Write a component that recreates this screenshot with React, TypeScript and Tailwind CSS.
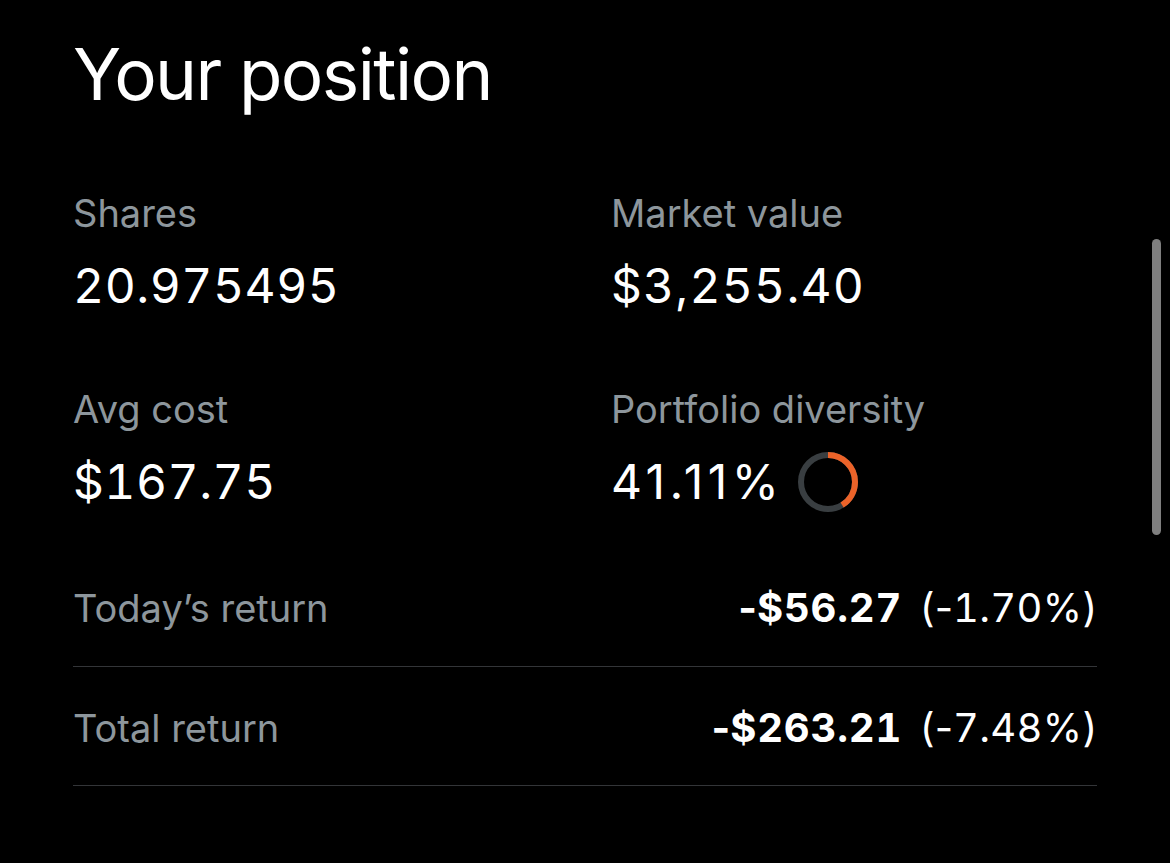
import React from "react";

function Ring() {
  const r = 27;
  const c = 2 * Math.PI * r;
  const pct = 0.4111;
  return (
    <svg width="62" height="62" viewBox="0 0 62 62" className="ml-[14px] shrink-0">
      <circle cx="31" cy="31" r={r} fill="none" stroke="#393e41" strokeWidth="6" />
      <circle
        cx="31"
        cy="31"
        r={r}
        fill="none"
        stroke="#ec6329"
        strokeWidth="6"
        strokeDasharray={`${c * pct} ${c}`}
        transform="rotate(-90 31 31)"
      />
    </svg>
  );
}

function Stat({ label, children }: { label: string; children: React.ReactNode }) {
  return (
    <div className="flex flex-col">
      <div className="h-[46px] text-[38px] leading-[46px] text-[#8d969c]">{label}</div>
      <div className="mt-[22px] flex h-[56px] items-center text-[48px] leading-[56px] text-white">
        {children}
      </div>
    </div>
  );
}

function Ret({ amount, pct }: { amount: string; pct: string }) {
  return (
    <span className="text-[40px] leading-[46px]">
      <span className="font-bold">
        -<span className="tabular-nums tracking-[0.8px]">{amount}</span>
      </span>
      <span className="ml-[18px]">
        (-<span className="tabular-nums tracking-[0.3px]">{pct}</span>)
      </span>
    </span>
  );
}

export default function App() {
  return (
    <div
      className="relative h-[863px] w-[1170px] overflow-hidden bg-black text-white"
      style={{ fontFamily: "Inter, 'Noto Sans', sans-serif" }}
    >
      <div className="pl-[73px] pr-[73px]">
        <h1 className="pt-[31px] text-[71px] leading-[86px] font-normal tracking-[-1.6px]">Your position</h1>
        <div className="mt-[73px] grid grid-cols-[538px_1fr] gap-y-[72px]">
          <Stat label="Shares">
            <span className="tabular-nums tracking-[0.5px]">20.975495</span>
          </Stat>
          <Stat label="Market value">
            <span className="tabular-nums tracking-[1.2px]">$3,255.40</span>
          </Stat>
          <Stat label="Avg cost">
            <span className="tabular-nums tracking-[0.5px]">$167.75</span>
          </Stat>
          <Stat label="Portfolio diversity">
            <span className="tracking-[4.5px]">41.11%</span>
            <Ring />
          </Stat>
        </div>
        <div className="mt-[75px]">
          <div className="flex items-center justify-between border-b border-[#333538] pb-[35px]">
            <span className="text-[38px] leading-[46px] text-[#8d969c]">Today’s return</span>
            <Ret amount="$56.27" pct="1.70%" />
          </div>
          <div className="flex items-center justify-between border-b border-[#333538] pt-[38px] pb-[34px]">
            <span className="text-[38px] leading-[46px] text-[#8d969c]">Total return</span>
            <Ret amount="$263.21" pct="7.48%" />
          </div>
        </div>
      </div>
      <div className="absolute left-[1152px] top-[239px] h-[296px] w-[9px] rounded-full bg-[#7f7f7f]" />
    </div>
  );
}
